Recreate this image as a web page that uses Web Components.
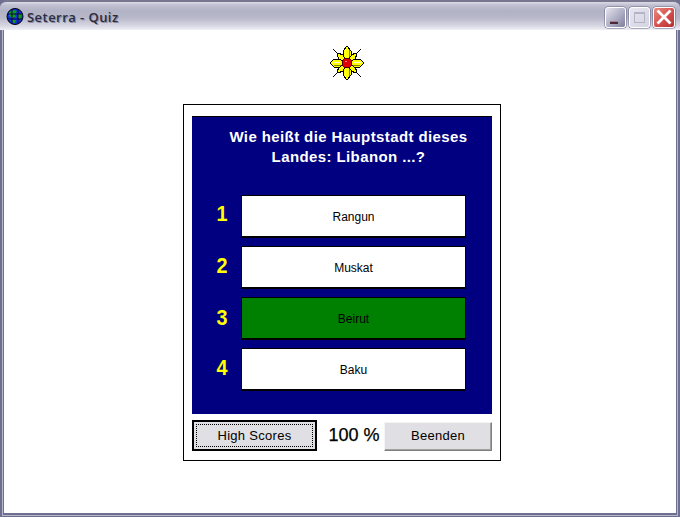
<!DOCTYPE html>
<html>
<head>
<meta charset="utf-8">
<title>Seterra - Quiz</title>
<style>
    html, body { margin: 0; padding: 0; height: 100%; background: #fff; }
</style>
</head>
<body>
<quiz-window caption="Seterra - Quiz">
    <quiz-flower></quiz-flower>
    <quiz-card>
        <span slot="question">Wie heißt die Hauptstadt dieses<br>Landes: Libanon ...?</span>
        <quiz-answer num="1" shift="-3">Rangun</quiz-answer>
        <quiz-answer num="2" shift="-2">Muskat</quiz-answer>
        <quiz-answer num="3" shift="-1" correct>Beirut</quiz-answer>
        <quiz-answer num="4" shift="-2">Baku</quiz-answer>
        <quiz-button slot="scores" focused>High Scores</quiz-button>
        <span slot="percent">100 %</span>
        <quiz-button slot="quit">Beenden</quiz-button>
    </quiz-card>
</quiz-window>

<script>
class QuizWindow extends HTMLElement {
    connectedCallback() {
        this.attachShadow({mode: "open"}).innerHTML = /* html */`
        <style>
            :host {
                display: flex;
                flex-direction: column;
                width: 680px;
                height: 517px;
                box-sizing: border-box;
                background: #6f6f92;
                overflow: hidden;
                font-family: "Liberation Sans", Arial, sans-serif;
            }
            .bar {
                flex: none;
                height: 30px;
                box-sizing: border-box;
                display: flex;
                align-items: center;
                padding: 1px 5px 0 6px;
                border-top: 2px solid #77778f;
                border-radius: 7px 7px 0 0;
                background: linear-gradient(#dcdce8 0, #c0c0d2 3px, #b2b2c6 9px, #b8b8ca 16px, #d8d8e4 24px, #f0f0f6 28px);
            }
            .caption {
                margin-left: 3px;
                font: 600 13px "Open Sans", sans-serif;
                letter-spacing: 0.45px;
                color: #2c2c3c;
                text-shadow: 1px 1px 0 #8c8ca4;
                flex: 1;
            }
            .btns { display: flex; gap: 3px; margin-top: 2px; }
            .frame {
                flex: 1;
                display: flex;
                min-height: 0;
                padding: 0 2px 1px;
            }
            .edge {
                flex: 1;
                display: flex;
                border: 1px solid #b8b8cc;
                border-top: 0;
            }
            .client {
                flex: 1;
                display: flex;
                flex-direction: column;
                align-items: center;
                background: #fff;
                border: 1px solid #6f6f92;
                border-top: 0;
                border-bottom-width: 2px;
            }
        </style>
        <div class="bar">
            <svg width="18" height="17" viewBox="0 0 18 17">
                <circle cx="9" cy="8.5" r="8" fill="#1030d8" stroke="#000" stroke-width="1"/>
                <path d="M3 4 L8 2 L11 3 L9 6 L10 9 L6 10 L3 8 Z M12 6 L16 6 L15 11 L12 10 Z M6 12 L10 12 L9 15 L7 15 Z" fill="#109a20"/>
                <path d="M2 6 H16 M1.5 11 H16.5 M6 1.5 V15.5 M12 1.5 V15.5" stroke="#0a0a3a" stroke-width="1" fill="none"/>
            </svg>
            <span class="caption">${this.getAttribute("caption")}</span>
            <div class="btns">
                <caption-button kind="min"></caption-button>
                <caption-button kind="max"></caption-button>
                <caption-button kind="close"></caption-button>
            </div>
        </div>
        <div class="frame"><div class="edge"><div class="client"><slot></slot></div></div></div>
        `;
    }
}

class CaptionButton extends HTMLElement {
    connectedCallback() {
        const kind = this.getAttribute("kind");
        const glyphs = {
            min: `<rect x="4" y="13" width="8" height="3" fill="#4a2a3a"/><rect x="4" y="13" width="8" height="1" fill="#a08090"/>`,
            max: `<rect x="4.5" y="4.5" width="10" height="10" fill="none" stroke="#b4b4c6" stroke-width="1"/><rect x="4" y="4" width="11" height="2" fill="#b4b4c6"/>`,
            close: `<path d="M3.5 2.5 L16.5 15.5 M16.5 2.5 L3.5 15.5" stroke="#fff" stroke-width="2.8" fill="none"/>`
        };
        this.attachShadow({mode: "open"}).innerHTML = /* html */`
        <style>
            :host {
                display: block;
                width: 21px;
                height: 21px;
                box-sizing: border-box;
                border: 1px solid #fff;
                border-radius: 3px;
                background: linear-gradient(135deg, #e4e4ee, #a8a8c0 60%, #7e7e9c);
                box-shadow: 0 0 0 0.5px #66668a;
            }
            :host([kind="max"]) { background: linear-gradient(135deg, #e6e6f0, #d4d4e2); }
            :host([kind="close"]) { width: 22px; background: linear-gradient(135deg, #e88a7c, #d24a48 60%, #b03034); }
            svg { display: block; }
        </style>
        <svg width="20" height="19" viewBox="0 0 20 19">${glyphs[kind]}</svg>
        `;
    }
}

class QuizFlower extends HTMLElement {
    connectedCallback() {
        this.attachShadow({mode: "open"}).innerHTML = /* html */`
        <style>
            :host { display: block; width: 36px; height: 36px; margin: 15px 0 23px 14px; flex: none; }
            svg { display: block; }
        </style>
        <svg width="36" height="36" viewBox="-18 -18 36 36" shape-rendering="crispEdges">
            <path d="M-14 -14 L14 14 M14 -14 L-14 14" stroke="#000" stroke-width="1"/>
            <g fill="#ffff00" stroke="#000" stroke-width="1">
                <path d="M0 0 L-8 -3 L-10 -10 L-3 -8 Z"/>
                <path d="M0 0 L8 -3 L10 -10 L3 -8 Z"/>
                <path d="M0 0 L-8 3 L-10 10 L-3 8 Z"/>
                <path d="M0 0 L8 3 L10 10 L3 8 Z"/>
                <path d="M0 -3 L-4 -7 L-4 -12 L0 -17 L4 -12 L4 -7 Z"/>
                <path d="M0 3 L-4 7 L-4 12 L0 17 L4 12 L4 7 Z"/>
                <path d="M-3 0 L-7 -4 L-13 -4 L-17 0 L-13 4 L-7 4 Z"/>
                <path d="M3 0 L7 -4 L13 -4 L17 0 L13 4 L7 4 Z"/>
            </g>
            <path d="M-14 -1 H-7 M7 -1 H14 M-2 -14 V-7 M-2 7 V14" stroke="#ffffe0" stroke-width="1"/>
            <path d="M-13 2.5 H-6 M6 2.5 H13 M2.5 -13 V-6 M2.5 6 V13" stroke="#808000" stroke-width="1.5"/>
            <circle cx="0" cy="0" r="5" fill="#e00000" stroke="#500000" stroke-width="1"/>
            <path d="M-2 -2 H0" stroke="#ff8080" stroke-width="1"/>
        </svg>
        `;
    }
}

class QuizCard extends HTMLElement {
    connectedCallback() {
        this.attachShadow({mode: "open"}).innerHTML = /* html */`
        <style>
            :host {
                display: block;
                width: 318px;
                box-sizing: border-box;
                margin-left: 4px;
                border: 1px solid #000;
                padding: 11px 8px 9px;
                background: #fff;
            }
            .panel {
                height: 298px;
                box-sizing: border-box;
                background: #000080;
                border-top: 1px solid #000;
                display: flex;
                flex-direction: column;
            }
            .question {
                height: 78px;
                box-sizing: border-box;
                padding: 10px 0 0 13px;
                text-align: center;
                color: #fff;
                font: bold 15px/20px "Liberation Sans", sans-serif;
                letter-spacing: 0.4px;
            }
            .answers { display: flex; flex-direction: column; gap: 8px; }
            .foot {
                display: flex;
                align-items: flex-start;
                margin-top: 6px;
            }
            .percent {
                width: 67px;
                box-sizing: border-box;
                text-align: center;
                padding: 5px 0 0 7px;
                font: 18px "Liberation Sans", sans-serif;
                -webkit-text-stroke: 0.25px #000;
                color: #000;
                white-space: nowrap;
            }
        </style>
        <div class="panel">
            <div class="question"><slot name="question"></slot></div>
            <div class="answers"><slot></slot></div>
        </div>
        <div class="foot">
            <slot name="scores"></slot>
            <div class="percent"><slot name="percent"></slot></div>
            <slot name="quit"></slot>
        </div>
        `;
    }
}

class QuizAnswer extends HTMLElement {
    connectedCallback() {
        const shift = this.getAttribute("shift") || 0;
        this.attachShadow({mode: "open"}).innerHTML = /* html */`
        <style>
            :host {
                display: grid;
                grid-template-columns: 49px 225px;
                height: 43px;
                align-items: center;
            }
            .num {
                justify-self: center;
                margin: ${shift * 2}px 0 0 11px;
                font: bold 22px "Liberation Sans", sans-serif;
                color: #ffff00;
                transform: scaleX(0.9);
            }
            .box {
                height: 43px;
                box-sizing: border-box;
                display: flex;
                align-items: center;
                justify-content: center;
                padding-top: 2px;
                background: #fff;
                border: 1px solid #000;
                border-bottom-width: 2px;
                font: 12px "Liberation Sans", sans-serif;
                color: #000;
            }
            :host([correct]) .box { background: #008000; }
        </style>
        <div class="num">${this.getAttribute("num")}</div>
        <div class="box"><slot></slot></div>
        `;
    }
}

class QuizButton extends HTMLElement {
    connectedCallback() {
        this.attachShadow({mode: "open"}).innerHTML = /* html */`
        <style>
            :host {
                display: block;
                width: 108px;
                height: 29px;
                margin-top: 2px;
                box-sizing: border-box;
                background: #e0dfe3;
                border: 1px solid;
                border-color: #f4f4f4 #808080 #808080 #f4f4f4;
                box-shadow: inset -1px -1px 0 #a0a0a0;
                padding-bottom: 2px;
                font: 13px "Liberation Sans", sans-serif;
                letter-spacing: 0.3px;
                color: #000;
            }
            :host([focused]) {
                width: 125px;
                height: 31px;
                margin-top: 0;
                border: 2px solid #000;
                box-shadow: none;
                padding: 2px;
            }
            .in {
                height: 100%;
                box-sizing: border-box;
                display: flex;
                align-items: center;
                justify-content: center;
            }
            :host([focused]) .in { border: 1px dotted #000; }
        </style>
        <div class="in"><slot></slot></div>
        `;
    }
}

customElements.define("caption-button", CaptionButton);
customElements.define("quiz-window", QuizWindow);
customElements.define("quiz-flower", QuizFlower);
customElements.define("quiz-answer", QuizAnswer);
customElements.define("quiz-button", QuizButton);
customElements.define("quiz-card", QuizCard);
</script>
</body>
</html>
